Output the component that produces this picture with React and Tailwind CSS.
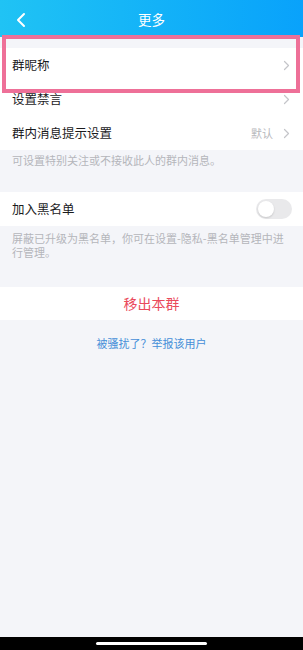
import React from 'react';

const Chevron = () => (
    <svg width="7" height="11" viewBox="0 0 7 11" fill="none" className="shrink-0">
        <path d="M1.5 1.5L5.5 5.5L1.5 9.5" stroke="#c4c5c9" strokeWidth="1.2" strokeLinecap="round" strokeLinejoin="round" />
    </svg>
);

const Row = ({ label, value, right }) => (
    <div className="h-[34px] bg-white flex items-center pl-3 pr-[13px]">
        <span className="flex-1 text-[12.5px] text-[#1b1b1d]">{label}</span>
        {value && <span className="text-[11px] text-[#b7b8bc] mr-[10px]">{value}</span>}
        {right || <Chevron />}
    </div>
);

const App = () => {
    return (
        <div
            className="relative h-[650px] w-full flex flex-col bg-[#f4f5f9] overflow-hidden"
            style={{ fontFamily: '"Noto Sans CJK SC", "Noto Sans", sans-serif' }}
        >
            {/* Header */}
            <div className="h-[37px] shrink-0 flex items-center relative bg-gradient-to-r from-[#20c3f4] to-[#09a2fb]">
                <svg width="12" height="16" viewBox="0 0 12 16" fill="none" className="ml-[15px] mt-[2px]">
                    <path d="M9 2L3 8L9 14" stroke="white" strokeWidth="2" strokeLinecap="round" strokeLinejoin="round" />
                </svg>
                <span className="absolute left-0 right-0 text-center text-white text-[13.5px] mt-[2px] pointer-events-none">更多</span>
            </div>

            <div className="h-[11px] shrink-0" />

            <Row label="群昵称" />
            <Row label="设置禁言" />
            <Row label="群内消息提示设置" value="默认" />

            <div className="h-[42px] shrink-0 px-3 pt-[3px]">
                <p className="text-[11px] leading-[14px] text-[#b4b6bb]">可设置特别关注或不接收此人的群内消息。</p>
            </div>

            <Row
                label="加入黑名单"
                right={
                    <div className="w-[36px] h-[20px] rounded-full bg-[#e9e9eb] p-[2px] flex items-center mr-[-2px]">
                        <div className="w-[16px] h-[16px] rounded-full bg-white shadow-[0_1px_2px_rgba(0,0,0,0.15)]" />
                    </div>
                }
            />

            <div className="h-[61px] shrink-0 px-3 pt-[6px]">
                <p className="text-[11px] leading-[13.5px] text-[#b4b6bb] pr-[6px]">
                    屏蔽已升级为黑名单，你可在设置-隐私-黑名单管理中进行管理。
                </p>
            </div>

            <div className="h-[33px] shrink-0 bg-white flex items-center justify-center">
                <span className="text-[14px] text-[#ea4a5c]">移出本群</span>
            </div>

            <div className="pt-[16px] flex justify-center">
                <span className="text-[11px] leading-[14px] text-[#468fd8]">被骚扰了？举报该用户</span>
            </div>

            <div className="flex-1" />

            {/* Home indicator bar */}
            <div className="h-[13px] shrink-0 bg-black flex justify-center pt-[5px]">
                <div className="w-[111px] h-[3px] rounded-full bg-white" />
            </div>

            {/* Highlight box */}
            <div className="absolute left-[2px] top-[35px] w-[298px] h-[58px] border-4 border-[#ee7098] pointer-events-none" />
        </div>
    );
};

export default App;
